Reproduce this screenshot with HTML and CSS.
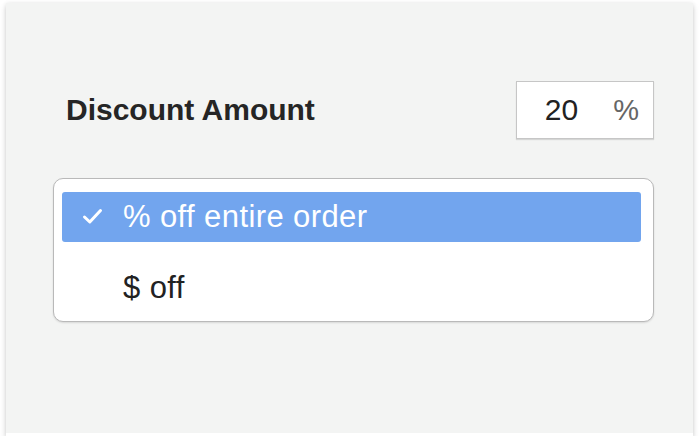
FILE: index.html
```html
<!DOCTYPE html>
<html>
<head>
<meta charset="utf-8">
<link rel="stylesheet" href="styles.css">
</head>
<body>
<div class="card">
  <div class="row">
    <div class="label">Discount Amount</div>
    <div class="amount">
      <span class="num">20</span>
      <span class="unit">%</span>
    </div>
  </div>
  <div class="menu">
    <div class="item selected">
      <span class="check">
        <svg width="21" height="17" viewBox="0 0 21 17"><path d="M2.5 9 L7.8 14 L18.5 2.5" fill="none" stroke="#fff" stroke-width="3" stroke-linecap="round" stroke-linejoin="round"/></svg>
      </span>
      <span class="text">% off entire order</span>
    </div>
    <div class="item">
      <span class="check"></span>
      <span class="text">$ off</span>
    </div>
  </div>
</div>
</body>
</html>
```
FILE: styles.css
```css
html, body {
  margin: 0;
  padding: 0;
  background: #ffffff;
}
body {
  font-family: "Liberation Sans", Arial, sans-serif;
  color: #222222;
}
.card {
  margin: 3px 7px 0 6px;
  height: 433px;
  box-sizing: border-box;
  background: #f3f4f3;
  border-bottom: 3px solid #ffffff;
  box-shadow: 0 3px 6px rgba(0, 0, 0, 0.18), 0 0 4px rgba(0, 0, 0, 0.06);
  padding: 78px 39px 0 47px;
}
.row {
  display: flex;
  justify-content: space-between;
  align-items: center;
  padding-left: 13px;
}
.label {
  font-size: 30px;
  font-weight: bold;
  color: #252525;
}
.amount {
  width: 138px;
  height: 58px;
  box-sizing: border-box;
  background: #ffffff;
  border: 1px solid #c6c6c6;
  box-shadow: 0 1px 1px rgba(0, 0, 0, 0.12);
  display: flex;
  align-items: center;
  justify-content: flex-end;
  padding-right: 14px;
  gap: 35px;
}
.num {
  font-size: 30px;
  color: #222222;
}
.unit {
  font-size: 29px;
  color: #666666;
}
.menu {
  margin-top: 39px;
  height: 144px;
  box-sizing: border-box;
  background: #ffffff;
  border: 1.5px solid #b9b9b9;
  border-radius: 10px;
  box-shadow: 0 1px 2px rgba(0, 0, 0, 0.12);
  padding: 12.5px 12px 0 8px;
}
.item {
  height: 50px;
  display: flex;
  align-items: center;
  border-radius: 3px;
}
.item + .item {
  margin-top: 21px;
}
.item.selected {
  background: #72a5ee;
  color: #ffffff;
}
.check {
  width: 61px;
  padding-left: 20px;
  box-sizing: border-box;
  display: flex;
  align-items: center;
}
.text {
  font-size: 31px;
  letter-spacing: 0.4px;
}
```
